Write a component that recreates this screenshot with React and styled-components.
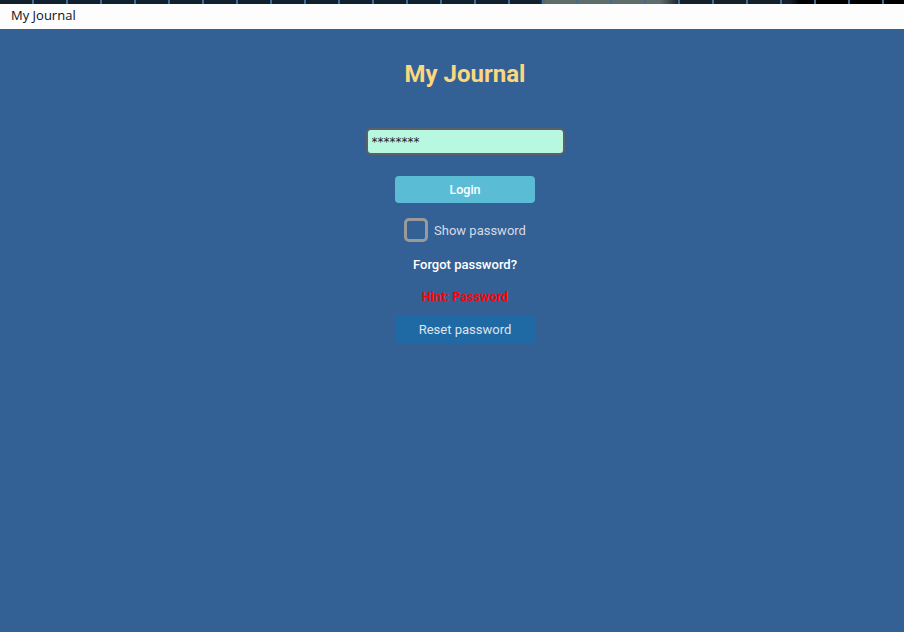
import React, { useState } from "react";
import styled, { createGlobalStyle } from "styled-components";

const Global = createGlobalStyle`
  html, body { margin: 0; padding: 0; height: 100%; }
  body { background: #336195; overflow: hidden; }
  #root { height: 100%; }
`;

const Page = styled.div`
  width: 904px;
  height: 632px;
  display: flex;
  flex-direction: column;
  background: #336195;
`;

const Desktop = styled.div`
  height: 4px;
  flex: none;
  background:
    repeating-linear-gradient(90deg, transparent 0 32px, #3f6a9a 32px 34px),
    linear-gradient(90deg, #10202c 0 540px, #5d6e6a 545px 660px, #16202a 680px 790px, #000 800px);
`;

const TitleBar = styled.div`
  height: 25px;
  flex: none;
  box-sizing: border-box;
  background: #fdfdfd;
  padding: 2px 0 0 11px;
  line-height: 18px;
  font-family: "Open Sans", "DejaVu Sans", sans-serif;
  font-size: 13px;
  color: #111;
`;

const Content = styled.main`
  flex: 1;
  display: flex;
  flex-direction: column;
  align-items: center;
  padding-left: 26px;
  font-family: Roboto, "Liberation Sans", sans-serif;
`;

const Heading = styled.h1`
  margin: 30px 0 0;
  height: 30px;
  line-height: 30px;
  font-size: 24px;
  font-weight: 700;
  color: #fbd87f;
`;

const Input = styled.input`
  box-sizing: border-box;
  margin-top: 39px;
  width: 199px;
  height: 27px;
  border: 2px solid #5a6168;
  border-radius: 5px;
  background: #b9f8e0;
  padding: 0 4px;
  font-family: "DejaVu Sans", sans-serif;
  font-size: 12px;
  color: #222;
  outline: none;
`;

const Button = styled.button`
  box-sizing: border-box;
  width: 140px;
  height: 27px;
  margin-top: ${(p) => p.$mt}px;
  border: none;
  border-radius: 4px;
  background: ${(p) => p.$bg};
  color: ${(p) => p.$color};
  font-family: Roboto, "Liberation Sans", sans-serif;
  font-size: ${(p) => p.$size}px;
  font-weight: ${(p) => p.$weight};
  cursor: pointer;
`;

const CheckRow = styled.label`
  margin-top: 15px;
  display: flex;
  align-items: center;
  gap: 6px;
  color: #d6dbe6;
  font-size: 13px;
  height: 24px;
`;

const Box = styled.span`
  box-sizing: border-box;
  width: 24px;
  height: 24px;
  border: 3px solid #9a9a9a;
  border-radius: 5px;
`;

const Link = styled.div`
  margin-top: ${(p) => p.$mt}px;
  font-size: ${(p) => p.$size}px;
  font-weight: ${(p) => p.$weight};
  color: ${(p) => p.$color};
  line-height: 16px;
`;

export default function App() {
  const [pw, setPw] = useState("********");
  return (
    <>
      <Global />
      <Page>
        <Desktop />
        <TitleBar>My Journal</TitleBar>
        <Content>
          <Heading>My Journal</Heading>
          <Input type="text" value={pw} onChange={(e) => setPw(e.target.value)} />
          <Button $mt={21} $size={12.5} $bg="#5bbcd6" $color="#ffffff" $weight={500}>Login</Button>
          <CheckRow>
            <Box />
            Show password
          </CheckRow>
          <Link $mt={15} $size={13} $weight={500} $color="#ffffff">Forgot password?</Link>
          <Link $mt={16} $size={12.7} $weight={700} $color="#ff0000">Hint: Password</Link>
          <Button $mt={11} $size={13} $bg="#1f69a5" $color="#dfe4ee" $weight={400}>Reset password</Button>
        </Content>
      </Page>
    </>
  );
}
